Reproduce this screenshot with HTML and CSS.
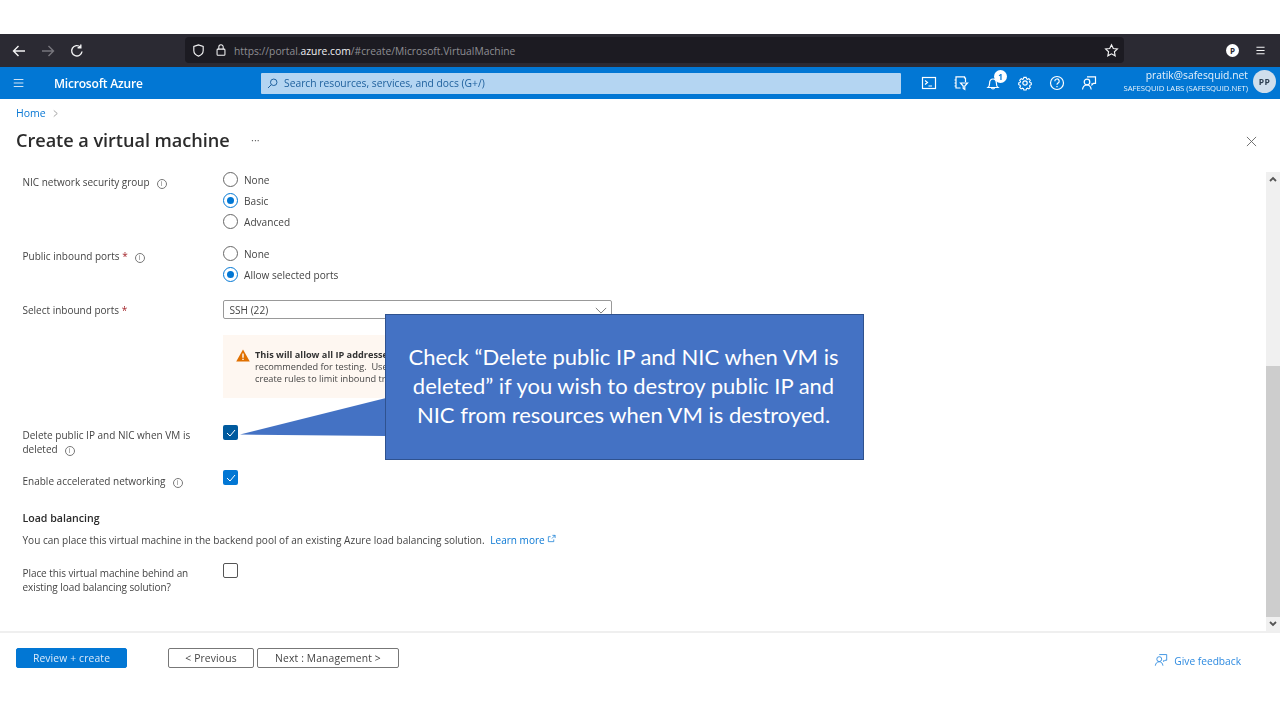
FILE: index.html
```html
<!DOCTYPE html>
<html lang="en">
<head>
<meta charset="utf-8">
<title>Create a virtual machine</title>
<link rel="stylesheet" href="styles.css">
</head>
<body>
<div class="slide">
  <div class="top-gap"></div>
  <header class="browser">
    <div class="nav-icons">
      <svg class="ic" viewBox="0 0 16 16"><path d="M14 8H2.500M7.500 3 2.500 8l5 5"/></svg>
      <svg class="ic dim" viewBox="0 0 16 16"><path d="M2 8h11.500M8.500 3l5 5-5 5"/></svg>
      <svg class="ic" viewBox="0 0 16 16"><path d="M13 8.500A5.200 5.200 0 1 1 11.400 4M11.800 1.500v3.200H8.600"/></svg>
    </div>
    <div class="urlbar">
      <svg class="ic shield" viewBox="0 0 16 16"><path d="M8 2 3 3.600V8c0 3 2.200 5 5 6 2.800-1 5-3 5-6V3.600z"/></svg>
      <svg class="ic lock" viewBox="0 0 16 16"><rect x="3.500" y="7" width="9" height="7" rx="1"/><path d="M5.500 7V4.500a2.500 2.500 0 0 1 5 0V7"/></svg>
      <span class="url">https://portal.<b>azure.com</b>/#create/Microsoft.VirtualMachine</span>
      <svg class="ic star" viewBox="0 0 16 16"><path d="m8 1.800 1.900 4 4.400.5-3.200 3 .8 4.400L8 11.600l-3.900 2.100.8-4.400-3.200-3 4.400-.5z"/></svg>
    </div>
    <div class="browser-right">
      <span class="profile">P</span>
      <svg class="ic menu" viewBox="0 0 16 16"><path d="M3 4h10M3 8h10M3 12h10"/></svg>
    </div>
  </header>
  <header class="azure">
    <svg class="ic hamb" viewBox="0 0 16 16"><path d="M2 4h11M2 8h11M2 12h11"/></svg>
    <span class="brand">Microsoft Azure</span>
    <div class="search">
      <svg class="ic search-ic" viewBox="0 0 16 16"><circle cx="9.500" cy="6.500" r="4"/><path d="M6.500 9.500 2.500 13.500"/></svg>
      <span>Search resources, services, and docs (G+/)</span>
    </div>
    <div class="tools">
      <svg class="ic tool" viewBox="0 0 16 16"><rect x="1.500" y="2.500" width="13" height="11"/><path d="m4 5.500 2.500 2L4 9.500M7.500 11h3.500"/></svg>
      <svg class="ic tool" viewBox="0 0 16 16"><path d="M3 3V1.800h8.500V3h1v4M3 3v10h4.500M1.500 5H3M1.500 8H3M1.500 11H3M7.500 8h7l-2.700 3v3.500l-1.600-1V11z"/></svg>
      <span class="bell">
        <svg class="ic tool" viewBox="0 0 16 16"><path d="M3 12.500h10c-1.200-1-1.600-2-1.600-4.300 0-2.500-1.300-4.200-3.400-4.200S4.600 5.700 4.600 8.200C4.600 10.500 4.200 11.500 3 12.500zM6.500 12.500a1.500 1.500 0 0 0 3 0"/></svg>
        <span class="badge">1</span>
      </span>
      <svg class="ic tool" viewBox="0 0 16 16"><circle cx="8" cy="8" r="2.200"/><path d="M6.700 2h2.600l.4 1.600 1.200.5 1.400-.8 1.600 1.800-.9 1.400.5 1.200 1.500.4v2l-1.500.5-.5 1.100.9 1.400-1.600 1.700-1.400-.8-1.200.5-.4 1.500H6.700l-.4-1.500-1.200-.5-1.400.8-1.600-1.700.9-1.400-.5-1.100-1.500-.5v-2l1.500-.4.500-1.200-.9-1.400 1.600-1.800 1.400.8 1.200-.5z" transform="translate(.8 .6) scale(.9)"/></svg>
      <svg class="ic tool" viewBox="0 0 16 16"><circle cx="8" cy="8" r="6.500"/><path d="M5.800 6.200A2.200 2.200 0 1 1 9 8.100c-.7.4-1 .8-1 1.700M8 11v1.200"/></svg>
      <svg class="ic tool" viewBox="0 0 16 16"><path d="M6 1.800h8.500v6.500h-2l-1.500 1.500V8.300"/><circle cx="6" cy="7" r="2.800"/><path d="M1.500 14.500c.4-2.800 2-4.500 4.500-4.500s3.800 1.700 4.200 4.500"/></svg>
    </div>
    <div class="account">
      <div class="acct-text">
        <span class="email">pratik@safesquid.net</span>
        <span class="org">SAFESQUID LABS (SAFESQUID.NET)</span>
      </div>
      <span class="avatar">PP</span>
    </div>
  </header>
  <nav class="crumbs"><a>Home</a><svg class="ic chev" viewBox="0 0 8 10"><path d="m2 1.500 4 3.500-4 3.500"/></svg></nav>
  <div class="title-row">
    <h1>Create a virtual machine</h1>
    <span class="more">···</span>
    <svg class="ic close" viewBox="0 0 12 12"><path d="m1 1 10 10M11 1 1 11"/></svg>
  </div>
  <div class="body-row">
    <main class="form">
      <div class="row r-nsg">
        <div class="lab">NIC network security group<i class="info">i</i></div>
        <div class="radios">
          <label class="radio"><span class="dot"></span>None</label>
          <label class="radio"><span class="dot on"></span>Basic</label>
          <label class="radio"><span class="dot"></span>Advanced</label>
        </div>
      </div>
      <div class="row r-ports">
        <div class="lab">Public inbound ports <em>*</em><i class="info">i</i></div>
        <div class="radios">
          <label class="radio"><span class="dot"></span>None</label>
          <label class="radio"><span class="dot on"></span>Allow selected ports</label>
        </div>
      </div>
      <div class="row r-select">
        <div class="lab">Select inbound ports <em>*</em></div>
        <div class="ctl">
          <div class="select">SSH (22)<svg class="ic sel-chev" viewBox="0 0 14 8"><path d="m1 1 6 6 6-6"/></svg></div>
          <div class="warn">
            <svg class="warn-ic" viewBox="0 0 14 13"><path d="M7 .5 13.800 12.500H.2z"/><path class="mark" d="M7 4.500v4.300M7 9.800v1.300"/></svg>
            <p><b>This will allow all IP addresses</b><br>recommended for testing.&nbsp; Use<br>create rules to limit inbound tra</p>
          </div>
        </div>
      </div>
      <div class="row r-del">
        <div class="lab two">Delete public IP and NIC when VM is deleted<i class="info">i</i></div>
        <span class="check dark"><svg viewBox="0 0 10 8"><path d="m1 4 3 3 5-6"/></svg></span>
      </div>
      <div class="row r-accel">
        <div class="lab">Enable accelerated networking<i class="info">i</i></div>
        <span class="check"><svg viewBox="0 0 10 8"><path d="m1 4 3 3 5-6"/></svg></span>
      </div>
      <h2>Load balancing</h2>
      <p class="desc">You can place this virtual machine in the backend pool of an existing Azure load balancing solution. <a>Learn more<svg class="ic ext" viewBox="0 0 10 10"><path d="M6 1.500H9V4.500M9 1.500 5.500 5M7.500 6V8.500H1.500V3H4"/></svg></a></p>
      <div class="row r-lb">
        <div class="lab two">Place this virtual machine behind an existing load balancing solution?</div>
        <span class="check off"></span>
      </div>
    </main>
    <aside class="scrollbar">
      <svg class="ic arrow" viewBox="0 0 10 10"><path d="m2 7 3-3 3 3"/></svg>
      <div class="track"><div class="thumb"></div></div>
      <svg class="ic arrow" viewBox="0 0 10 10"><path d="m2 3 3 3 3-3"/></svg>
    </aside>
  </div>
  <footer class="foot">
    <button class="btn primary">Review + create</button>
    <button class="btn prev">&lt; Previous</button>
    <button class="btn next">Next : Management &gt;</button>
    <a class="feedback">
      <svg class="ic fb" viewBox="0 0 16 16"><path d="M6 1.800h8.500v6.500h-2l-1.500 1.500V8.300"/><circle cx="6" cy="7" r="2.800"/><path d="M1.500 14.500c.4-2.800 2-4.500 4.500-4.500s3.800 1.700 4.200 4.500"/></svg>
      Give feedback
    </a>
  </footer>
  <svg class="tail" viewBox="0 0 146 40"><path d="M146 0 0 36.500 146 38z"/></svg>
  <div class="callout">Check “Delete public IP and NIC when VM is deleted” if you wish to destroy public IP and NIC from resources when VM is destroyed.</div>
</div>
</body>
</html>
```
FILE: styles.css
```css
* { box-sizing: border-box; }
html, body { margin: 0; padding: 0; background: #fff; }
body { font-family: "Open Sans", "Noto Sans", sans-serif; color: #3b3b3b; font-size: 10px; }
.slide { position: relative; width: 1280px; height: 720px; overflow: hidden; display: flex; flex-direction: column; filter: blur(.3px); }
.ic { fill: none; stroke: currentColor; stroke-width: 1.200; flex: none; display: block; }

.top-gap { height: 34px; flex: none; }

.browser { height: 33px; flex: none; background: #2b2a33; display: flex; align-items: center; color: #f4f4f5; }
.nav-icons { display: flex; align-items: center; gap: 13px; width: 185px; padding-left: 11px; }
.nav-icons .ic { width: 16px; height: 16px; stroke-width: 1.400; }
.nav-icons .dim { color: #77767d; }
.urlbar { width: 939px; height: 26px; background: #1c1b22; border-radius: 4px; display: flex; align-items: center; padding: 0 5px 0 6px; margin-top: -1px; }
.shield { width: 15px; height: 15px; }
.lock { width: 14px; height: 14px; margin-left: 8px; }
.url { margin: 1px 0 0 6px; font-size: 10.300px; color: #8e8e93; flex: 1; }
.url b { font-weight: 400; color: #f0f0f2; }
.star { width: 15px; height: 15px; }
.browser-right { flex: 1; display: flex; align-items: center; padding-left: 102px; gap: 15px; }
.profile { width: 13px; height: 13px; border-radius: 50%; background: #fff; color: #2b2a33; font-size: 8px; font-weight: 700; display: flex; align-items: center; justify-content: center; }
.menu { width: 13px; height: 13px; stroke-width: 1.300; }

.azure { height: 32px; flex: none; background: #0277d4; display: flex; align-items: center; color: #fff; position: relative; }
.hamb { width: 14px; height: 14px; margin-left: 12px; color: #cfe3f6; }
.brand { margin-left: 28px; width: 207px; font-size: 12px; font-weight: 600; letter-spacing: -.2px; }
.search { width: 640px; height: 21px; background: #b4d5f2; display: flex; align-items: center; padding-left: 5px; color: #1d5f9c; border-radius: 1px; font-size: 10.300px; }
.search-ic { width: 13px; height: 13px; margin-right: 5px; }
.tools { display: flex; align-items: center; gap: 16px; margin-left: 20px; }
.tool { width: 16px; height: 16px; }
.bell { position: relative; display: block; }
.badge { position: absolute; right: -6px; top: -5px; width: 13px; height: 13px; border-radius: 50%; background: #fff; color: #0277d4; font-size: 8px; font-weight: 700; display: flex; align-items: center; justify-content: center; }
.account { position: absolute; right: 4px; top: 2px; display: flex; align-items: center; gap: 5px; }
.acct-text { display: flex; flex-direction: column; align-items: flex-end; }
.email { font-size: 10.300px; line-height: 13px; color: #e8f2fb; letter-spacing: .02px; }
.org { font-size: 7.700px; line-height: 12px; color: #e8f2fb; }
.avatar { width: 23px; height: 23px; border-radius: 50%; background: #cfdeec; color: #2c3e50; font-size: 8.500px; font-weight: 700; display: flex; align-items: center; justify-content: center; letter-spacing: .3px; }

.crumbs { height: 28px; flex: none; display: flex; align-items: center; padding: 0 0 0 16px; font-size: 10.500px; color: #0a78d4; gap: 6px; }
.chev { width: 7px; height: 9px; color: #999; stroke-width: 1; }
.title-row { height: 45px; flex: none; display: flex; align-items: center; padding: 0 0 20px 16px; position: relative; }
h1 { margin: 0; font-size: 18.150px; font-weight: 600; color: #2b2b2b; width: 234px; letter-spacing: -.05px; }
.more { font-size: 11px; color: #666; margin-left: 1px; }
.close { width: 11px; height: 11px; position: absolute; right: 23px; top: 9px; color: #666; stroke-width: 1; }

.body-row { flex: 1; display: flex; min-height: 0; }
.form { flex: 1; overflow: hidden; padding: 0 0 0 22.500px; }
.scrollbar { width: 14px; background: #f0f0f0; display: flex; flex-direction: column; }
.arrow { width: 14px; height: 14px; padding: 2px; color: #555; stroke-width: 1.800; }
.track { flex: 1; display: flex; flex-direction: column; justify-content: flex-end; }
.thumb { height: 251px; background: #cdcdcd; }

.row { display: flex; align-items: flex-start; line-height: 14px; }
.lab { width: 200.500px; flex: none; color: #444; font-size: 10px; }
.lab.two { width: 173px; margin-right: 27.500px; }
.lab em { color: #a4262c; font-style: normal; }
.info { display: inline-flex; align-items: center; justify-content: center; width: 10px; height: 10px; margin-left: 7px; border: 1px solid #777; border-radius: 50%; font-size: 7px; font-style: normal; color: #777; vertical-align: 0; line-height: 1; }

.r-nsg { margin-top: -3px; }
.r-nsg .lab { padding-top: 6px; }
.radios { display: flex; flex-direction: column; }
.radio { display: flex; align-items: center; height: 21px; color: #444; font-size: 10.100px; }
.dot { width: 15px; height: 15px; border: 1.300px solid #666; border-radius: 50%; margin-right: 6px; background: #fff; position: relative; flex: none; }
.dot.on { border-color: #0277d4; }
.dot.on::after { content: ""; position: absolute; left: 2.700px; top: 2.700px; width: 7px; height: 7px; border-radius: 50%; background: #0277d4; }

.r-ports { margin-top: 11px; }
.r-ports .lab { padding-top: 6px; }
.r-select { margin-top: 15px; }
.r-select .lab { padding-top: 3px; }
.ctl { display: flex; flex-direction: column; }
.select { width: 389px; height: 19px; border: 1px solid #999; border-radius: 2px; padding: 0 0 0 5.500px; display: flex; align-items: center; color: #444; font-size: 10.100px; position: relative; }
.sel-chev { position: absolute; right: 4px; top: 6px; width: 12px; height: 7px; color: #666; stroke-width: 1; }
.warn { width: 389px; height: 63px; margin-top: 16px; background: #fef7f1; display: flex; padding: 14px 0 0 13px; }
.warn-ic { width: 14px; height: 13px; flex: none; fill: #e07000; }
.warn-ic .mark { stroke: #fff; stroke-width: 1.400; fill: none; }
.warn p { margin: 0 0 0 5px; font-size: 9.200px; line-height: 12px; white-space: nowrap; color: #444; }
.warn b { color: #333; }

.check { width: 15px; height: 15px; border-radius: 2px; background: #0277d4; display: flex; align-items: center; justify-content: center; flex: none; }
.check svg { width: 10px; height: 8px; fill: none; stroke: #fff; stroke-width: 1; }
.check.dark { background: #005a9e; }
.check.off { background: #fff; border: 1px solid #555; }

.r-del { margin-top: 27px; height: 30px; }
.r-del .lab { padding-top: 3px; }
.r-accel { margin-top: 15px; }
.r-accel .lab { padding-top: 4px; }
h2 { margin: 23px 0 0; font-size: 10.600px; line-height: 14px; font-weight: 600; color: #2b2b2b; }
.desc { margin: 8px 0 0; font-size: 10.050px; line-height: 14px; color: #444; }
.desc a { color: #0a78d4; margin-left: 3px; }
.ext { display: inline-block; width: 9px; height: 9px; margin-left: 2px; stroke-width: .8; vertical-align: 1px; }
.r-lb { margin-top: 16px; }
.r-lb .lab { padding-top: 2.500px; letter-spacing: -.07px; }

.foot { height: 89px; flex: none; border-top: 2px solid #efefef; display: flex; align-items: flex-start; padding: 15px 0 0 16px; position: relative; }
.btn { height: 20px; border-radius: 2px; font: inherit; font-size: 10.300px; letter-spacing: .15px; padding: 0; background: #fff; border: 1px solid #777; color: #444; }
.primary { width: 111px; background: #0277d4; border-color: #0277d4; color: #dbeafa; }
.prev { width: 86px; margin-left: 41px; }
.next { width: 142px; margin-left: 3px; }
.feedback { position: absolute; right: 39px; top: 21px; color: #2d8ae0; font-size: 10.200px; display: flex; align-items: center; gap: 6px; }
.fb { width: 14px; height: 14px; stroke-width: 1; margin-top: -3px; }

.tail { position: absolute; left: 240px; top: 398px; width: 146px; height: 40px; fill: #4472c4; }
.callout { position: absolute; left: 385px; top: 314px; width: 479px; height: 146px; background: #4472c4; border: 1px solid #2f528f; color: #fff; font-family: Lato, "Open Sans", sans-serif; font-size: 22px; line-height: 29px; text-align: center; padding: 27px 21px 0 19px; }
```
